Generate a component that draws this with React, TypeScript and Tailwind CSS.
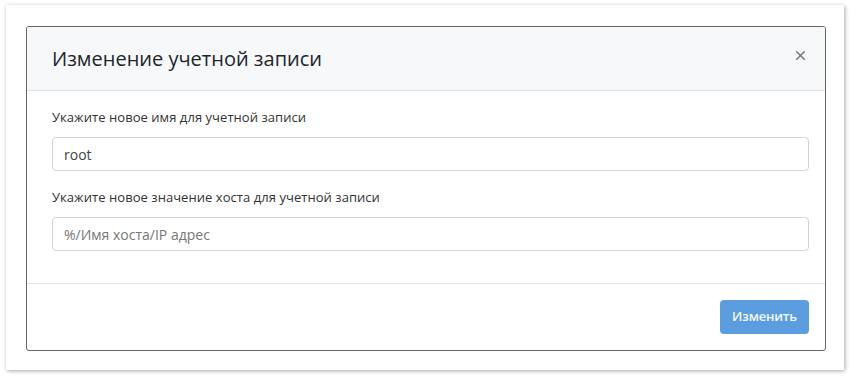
import { X } from 'lucide-react';

export default function App() {
  return (
    <div className="w-[852px] h-[378px] bg-white pt-[5px] pl-[6px]" style={{ fontFamily: '"Open Sans", "Noto Sans", sans-serif' }}>
      <div className="w-[838px] h-[365px] bg-white shadow-[1px_1px_4px_rgba(0,0,0,0.35)] pt-[21px] pl-[20px]">
        <div className="w-[800px] border border-[#666] rounded-[3px] bg-white overflow-hidden">
          {/* header */}
          <div className="h-[64px] bg-[#f7f8fa] border-b border-[#e2e4e7] flex items-center justify-between pl-[25px] pr-[17px]">
            <h3 className="text-[20px] text-[#212529] leading-none">Изменение учетной записи</h3>
            <button className="text-[#7a7a7a] pb-[6px]">
              <X size={15} strokeWidth={2.6} />
            </button>
          </div>

          {/* body */}
          <div className="px-[25px] pt-[16px] pb-[32px]">
            <div className="mb-[10px]">
              <label className="block text-[13px] tracking-[0.05px] leading-[20px] text-[#333] mb-[10px]">
                Укажите новое имя для учетной записи
              </label>
              <input
                type="text"
                defaultValue="root"
                className="w-[757px] h-[34px] border border-[#ced4da] rounded-[4px] px-[11px] text-[14px] text-[#444] outline-none"
              />
            </div>
            <div>
              <label className="block text-[13px] tracking-[0.05px] leading-[20px] text-[#333] mb-[10px] mt-[16px]">
                Укажите новое значение хоста для учетной записи
              </label>
              <input
                type="text"
                placeholder="%/Имя хоста/IP адрес"
                className="w-[757px] h-[34px] border border-[#ced4da] rounded-[4px] px-[11px] text-[14px] text-[#444] placeholder:text-[#777] outline-none"
              />
            </div>
          </div>

          {/* footer */}
          <div className="border-t border-[#e2e4e7] flex justify-end pr-[16px] pt-[16px] pb-[16px]">
            <button className="w-[89px] h-[34px] rounded-[4px] bg-[#5c9ddf] text-[#f4f8fd] text-[13px] font-semibold tracking-[-0.2px]">
              Изменить
            </button>
          </div>
        </div>
      </div>
    </div>
  );
}
